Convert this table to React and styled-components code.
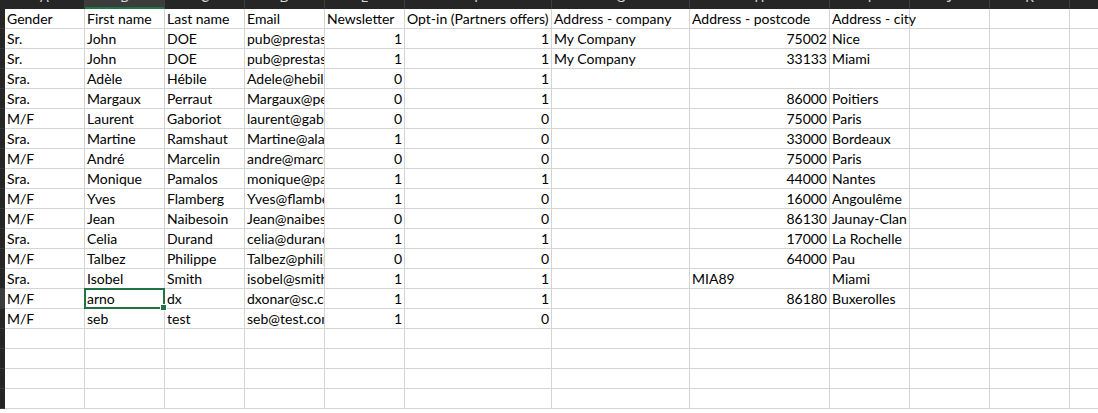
import React from 'react';
import styled, { createGlobalStyle, css } from 'styled-components';

const GlobalStyle = createGlobalStyle`
  html, body {
    margin: 0;
    padding: 0;
    background: #fff;
    overflow: hidden;
  }
`;

const COLS = [
  { key: 'A', width: 80 },
  { key: 'B', width: 80 },
  { key: 'C', width: 80 },
  { key: 'D', width: 80 },
  { key: 'E', width: 80 },
  { key: 'F', width: 147 },
  { key: 'G', width: 138 },
  { key: 'H', width: 140 },
  { key: 'I', width: 80 },
  { key: 'J', width: 80 },
  { key: 'K', width: 80 },
  { key: 'L', width: 80 },
];

const header = ['Gender', 'First name', 'Last name', 'Email', 'Newsletter', 'Opt-in (Partners offers)', 'Address - company', 'Address - postcode', 'Address - city'];

// [gender, first, last, email, newsletter, optin, company, postcode, city]
const rows = [
  ['Sr.', 'John', 'DOE', 'pub@prestashop.com', 1, 1, 'My Company', 75002, 'Nice'],
  ['Sr.', 'John', 'DOE', 'pub@prestashop.com', 1, 1, 'My Company', 33133, 'Miami'],
  ['Sra.', 'Adèle', 'Hébile', 'Adele@hebile.com', 0, 1, '', '', ''],
  ['Sra.', 'Margaux', 'Perraut', 'Margaux@perraut.com', 0, 1, '', 86000, 'Poitiers'],
  ['M/F', 'Laurent', 'Gaboriot', 'laurent@gaboriot.com', 0, 0, '', 75000, 'Paris'],
  ['Sra.', 'Martine', 'Ramshaut', 'Martine@alambic.com', 1, 0, '', 33000, 'Bordeaux'],
  ['M/F', 'André', 'Marcelin', 'andre@marcelin.com', 0, 0, '', 75000, 'Paris'],
  ['Sra.', 'Monique', 'Pamalos', 'monique@pamalos.com', 1, 1, '', 44000, 'Nantes'],
  ['M/F', 'Yves', 'Flamberg', 'Yves@flamberg.com', 1, 0, '', 16000, 'Angoulême'],
  ['M/F', 'Jean', 'Naibesoin', 'Jean@naibesoin.com', 0, 0, '', 86130, 'Jaunay-Clan'],
  ['Sra.', 'Celia', 'Durand', 'celia@durand.com', 1, 1, '', 17000, 'La Rochelle'],
  ['M/F', 'Talbez', 'Philippe', 'Talbez@philippe.com', 0, 0, '', 64000, 'Pau'],
  ['Sra.', 'Isobel', 'Smith', 'isobel@smith.com', 1, 1, '', 'MIA89', 'Miami'],
  ['M/F', 'arno', 'dx', 'dxonar@sc.com', 1, 1, '', 86180, 'Buxerolles'],
  ['M/F', 'seb', 'test', 'seb@test.com', 1, 0, '', '', ''],
];

const TOTAL_ROWS = 20;
const SELECTED = { row: 15, col: 1 };

const Sheet = styled.div`
  display: grid;
  grid-template-columns: 5px ${COLS.map((c) => `${c.width}px`).join(' ')};
  grid-template-rows: 9px repeat(${TOTAL_ROWS}, 20px);
  width: max-content;
  font-family: Lato, "Noto Sans", sans-serif;
  font-size: 14px;
  color: #000;
`;

const Corner = styled.div`
  background: #262626;
`;

const ColHeader = styled.div`
  background: ${(p) => (p.$active ? '#3c3c3c' : '#262626')};
  border-right: 1px solid #3e3e3e;
  border-bottom: ${(p) => (p.$active ? '2px solid #217346' : '1px solid #262626')};
  box-sizing: border-box;
  overflow: hidden;
  color: #d6d6d6;
  font-size: 13px;
  text-align: center;
  line-height: 8px;

  span {
    display: block;
    margin-top: -7px;
  }
`;

const RowHeader = styled.div`
  background: ${(p) => (p.$active ? '#3c3c3c' : '#262626')};
  border-bottom: 1px solid #3a3a3a;
  box-sizing: border-box;
`;

const Cell = styled.div`
  position: relative;
  box-sizing: border-box;
  border-right: 1px solid #d4d4d4;
  border-bottom: 1px solid #d4d4d4;
  padding: 0 2px;
  line-height: 19px;
  white-space: nowrap;
  overflow: ${(p) => (p.$spill ? 'visible' : 'hidden')};
  text-align: ${(p) => (p.$num ? 'right' : 'left')};
  z-index: ${(p) => (p.$spill ? 1 : 0)};

  ${(p) =>
    p.$selected &&
    css`
      overflow: visible;
      z-index: 2;
    `}
`;

const Selection = styled.div`
  position: absolute;
  left: -1px;
  top: -1px;
  right: -1px;
  bottom: -1px;
  border: 2px solid #217346;
  pointer-events: none;

  &::after {
    content: '';
    position: absolute;
    right: -4px;
    bottom: -4px;
    width: 5px;
    height: 5px;
    background: #217346;
    border: 1px solid #fff;
  }
`;

function cellsForRow(r) {
  if (r === 1) return header.map((v) => ({ value: v, num: false }));
  const d = rows[r - 2];
  if (!d) return [];
  return d.map((v) => ({ value: v, num: typeof v === 'number' }));
}

export default function App() {
  const body = [];
  for (let r = 1; r <= TOTAL_ROWS; r++) {
    const cells = cellsForRow(r);
    body.push(<RowHeader key={`rh${r}`} $active={r === SELECTED.row} />);
    COLS.forEach((c, ci) => {
      const cell = cells[ci];
      const selected = r === SELECTED.row && ci === SELECTED.col;
      const nextEmpty = !cells[ci + 1] || cells[ci + 1].value === '';
      const value = cell ? cell.value : '';
      const spill = value !== '' && !cell.num && nextEmpty;
      body.push(
        <Cell key={`${r}-${c.key}`} $num={cell && cell.num} $spill={spill} $selected={selected}>
          {value}
          {selected && <Selection />}
        </Cell>
      );
    });
  }

  return (
    <>
      <GlobalStyle />
      <Sheet>
        <Corner />
        {COLS.map((c, ci) => (
          <ColHeader key={c.key} $active={ci === SELECTED.col}>
            <span>{c.key}</span>
          </ColHeader>
        ))}
        {body}
      </Sheet>
    </>
  );
}
